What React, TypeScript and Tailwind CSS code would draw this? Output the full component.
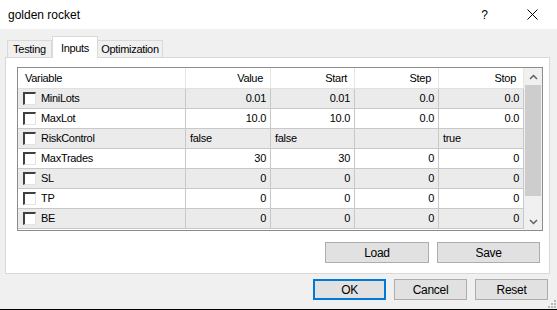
const rows = [
  { name: "MiniLots", value: "0.01", start: "0.01", step: "0.0", stop: "0.0" },
  { name: "MaxLot", value: "10.0", start: "10.0", step: "0.0", stop: "0.0" },
  { name: "RiskControl", value: "false", start: "false", step: "", stop: "true", left: true },
  { name: "MaxTrades", value: "30", start: "30", step: "0", stop: "0" },
  { name: "SL", value: "0", start: "0", step: "0", stop: "0" },
  { name: "TP", value: "0", start: "0", step: "0", stop: "0" },
  { name: "BE", value: "0", start: "0", step: "0", stop: "0" },
];

const Checkbox = () => (
  <div className="h-[13px] w-[13px] shrink-0 border-t-2 border-l-2 border-r border-b border-t-[#404040] border-l-[#404040] border-r-[#e3e3e3] border-b-[#e3e3e3] bg-white" />
);

const Btn = ({ label, w, focus }: { label: string; w: string; focus?: boolean }) => (
  <div
    className={`${w} flex h-[21px] items-center justify-center bg-[#e1e1e1] ${
      focus ? "border-2 border-[#0078d7]" : "border border-[#adadad]"
    }`}
  >
    {label}
  </div>
);

const Chevron = ({ down }: { down?: boolean }) => (
  <svg width="9" height="6" viewBox="0 0 9 6">
    <polyline
      points={down ? "1,1 4.5,4.5 8,1" : "1,5 4.5,1.5 8,5"}
      fill="none"
      stroke="#606060"
      strokeWidth="1.5"
    />
  </svg>
);

export default function App() {
  return (
    <div className="flex h-[310px] w-[557px] flex-col overflow-hidden bg-[#f0f0f0] font-['Liberation_Sans',Arial,sans-serif] text-[11px] tracking-[-0.3px] text-black">
      {/* title bar */}
      <div className="flex h-[29px] shrink-0 items-center bg-white pl-[8px] pr-[19px] text-[12px] tracking-normal">
        <span className="flex-1">golden rocket</span>
        <span className="mr-[39px] text-[12px]">?</span>
        <svg width="11" height="11" viewBox="0 0 11 11">
          <path d="M0.5 0.5 L10.5 10.5 M10.5 0.5 L0.5 10.5" stroke="#000" strokeWidth="1" />
        </svg>
      </div>

      {/* tabs */}
      <div className="flex h-[28px] shrink-0 items-end pl-[7px]">
        <div className="flex h-[17px] w-[45px] items-center justify-center border border-b-0 border-[#d9d9d9] bg-[#f0f0f0]">
          Testing
        </div>
        <div className="relative z-10 -mb-px flex h-[22px] w-[46px] items-start justify-center border border-b-0 border-[#d9d9d9] bg-white pt-[3px]">
          Inputs
        </div>
        <div className="flex h-[17px] w-[65px] items-center justify-center border border-b-0 border-l-0 border-[#d9d9d9] bg-[#f0f0f0]">
          Optimization
        </div>
      </div>

      {/* panel */}
      <div className="ml-[5px] flex h-[217px] w-[545px] shrink-0 flex-col border border-[#d9d9d9] bg-white pl-[11px] pt-[9px]">
        <div className="flex h-[164px] w-[526px] border border-[#8c8c8c]">
          <div className="flex w-[506px] flex-col">
            <div className="flex h-[21px] shrink-0 border-b border-[#e0e0e0] bg-white">
              <div className="flex w-[168px] items-center border-r border-[#e5e5e5] pl-[7px]">Variable</div>
              <div className="flex w-[85px] items-center justify-end border-r border-[#e5e5e5] pr-[7px]">Value</div>
              <div className="flex w-[84px] items-center justify-end border-r border-[#e5e5e5] pr-[7px]">Start</div>
              <div className="flex w-[84px] items-center justify-end border-r border-[#e5e5e5] pr-[7px]">Step</div>
              <div className="flex w-[85px] items-center justify-end border-r border-[#e5e5e5] pr-[7px]">Stop</div>
            </div>
            {rows.map((r, i) => (
              <div
                key={r.name}
                className={`flex h-[20px] shrink-0 border-b border-[#c8c8c8] ${
                  i % 2 === 0 ? "bg-[#ebebeb]" : "bg-white"
                }`}
              >
                <div className="flex w-[168px] items-center gap-[5px] border-r border-[#c8c8c8] pl-[5px]">
                  <Checkbox />
                  <span>{r.name}</span>
                </div>
                {[r.value, r.start, r.step, r.stop].map((v, j) => (
                  <div
                    key={j}
                    className={`flex items-center border-r border-[#c8c8c8] ${
                      j === 0 || j === 3 ? "w-[85px]" : "w-[84px]"
                    } ${r.left ? "justify-start pl-[4px]" : "justify-end pr-[4px]"}`}
                  >
                    {v}
                  </div>
                ))}
              </div>
            ))}
          </div>
          {/* scrollbar */}
          <div className="flex w-[18px] flex-col bg-[#f0f0f0]">
            <div className="flex h-[17px] items-center justify-center">
              <Chevron />
            </div>
            <div className="mx-[1px] h-[111px] bg-[#cdcdcd]" />
            <div className="flex-1" />
            <div className="flex h-[17px] items-center justify-center">
              <Chevron down />
            </div>
          </div>
        </div>
        <div className="mt-[11px] flex justify-end gap-[8px] pr-[9px] text-[12px]">
          <Btn label="Load" w="w-[104px]" />
          <Btn label="Save" w="w-[103px]" />
        </div>
      </div>

      {/* footer buttons */}
      <div className="mt-[5px] flex shrink-0 justify-end gap-[8px] pr-[9px] text-[12px]">
        <Btn label="OK" w="w-[73px]" focus />
        <Btn label="Cancel" w="w-[73px]" />
        <Btn label="Reset" w="w-[73px]" />
      </div>
      <div className="flex flex-1 items-end justify-end pr-[1px]">
        <svg width="8" height="8" viewBox="0 0 8 8" className="mb-[1px]">
          {[
            [6, 0],
            [6, 3],
            [3, 3],
            [6, 6],
            [3, 6],
            [0, 6],
          ].map(([x, y], k) => (
            <rect key={k} x={x} y={y} width="2" height="2" fill="#b8b8b8" />
          ))}
        </svg>
      </div>
      <div className="h-px shrink-0 bg-black" />
    </div>
  );
}
